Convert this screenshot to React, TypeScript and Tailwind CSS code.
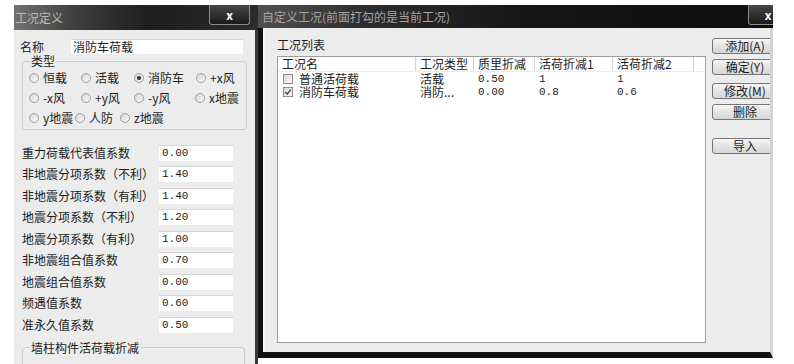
const COEFS: [string, string][] = [
  ["重力荷载代表值系数", "0.00"],
  ["非地震分项系数（不利）", "1.40"],
  ["非地震分项系数（有利）", "1.40"],
  ["地震分项系数（不利）", "1.20"],
  ["地震分项系数（有利）", "1.00"],
  ["非地震组合值系数", "0.70"],
  ["地震组合值系数", "0.00"],
  ["频遇值系数", "0.60"],
  ["准永久值系数", "0.50"],
];

type Opt = { label: string; w: number; on?: boolean };

const RADIO_ROWS: Opt[][] = [
  [
    { label: "恒载", w: 52 },
    { label: "活载", w: 53 },
    { label: "消防车", w: 62, on: true },
    { label: "+x风", w: 50 },
  ],
  [
    { label: "-x风", w: 52 },
    { label: "+y风", w: 53 },
    { label: "-y风", w: 61 },
    { label: "x地震", w: 50 },
  ],
  [
    { label: "y地震", w: 46 },
    { label: "人防", w: 45 },
    { label: "z地震", w: 50 },
  ],
];

const COLS = [139, 58, 61, 78, 81];
const HEADERS = ["工况名", "工况类型", "质里折减", "活荷折减1", "活荷折减2"];
const ROWS = [
  { on: false, cells: ["普通活荷载", "活载", "0.50", "1", "1"] },
  { on: true, cells: ["消防车荷载", "消防...", "0.00", "0.8", "0.6"] },
];

const BUTTONS = [
  { label: "添加(A)", mt: "mt-0" },
  { label: "确定(Y)", mt: "mt-[5px]" },
  { label: "修改(M)", mt: "mt-[8px]" },
  { label: "删除", mt: "mt-[5px]" },
  { label: "导入", mt: "mt-[18px]" },
];

const mono = "font-['Liberation_Mono',monospace] text-[11px]";

function Radio({ on }: { on?: boolean }) {
  return (
    <span className="w-[10px] h-[10px] rounded-full border border-[#a0a0a0] bg-[linear-gradient(135deg,#d4d4d4,#fbfbfb)] flex items-center justify-center shrink-0">
      {on ? <span className="w-[4px] h-[4px] rounded-full bg-[#2a2a2a]" /> : null}
    </span>
  );
}

function Check({ on }: { on?: boolean }) {
  return (
    <span className="w-[10px] h-[10px] border border-[#8e8e8e] bg-[linear-gradient(135deg,#d8d8d8,#f8f8f8)] flex items-center justify-center shrink-0">
      {on ? (
        <svg viewBox="0 0 10 10" className="w-[8px] h-[8px]">
          <path d="M1.5 5 L4 7.6 L8.6 2" stroke="#333" strokeWidth="1.4" fill="none" />
        </svg>
      ) : null}
    </span>
  );
}

function CloseBtn({ className }: { className?: string }) {
  return (
    <div
      className={
        "h-[20px] border border-t-0 border-[#8c8c8c] rounded-b-[3px] bg-[linear-gradient(#474747,#1a1a1a)] flex items-center justify-center text-white font-bold text-[12px] leading-none shrink-0 " +
        (className ?? "")
      }
    >
      x
    </div>
  );
}

function isNum(s: string) {
  return /^[0-9.]+$/.test(s);
}

function LeftWindow() {
  return (
    <div className="w-[244px] h-[359px] flex flex-col shrink-0">
      <div className="h-[25px] flex items-start justify-between pr-[8px] bg-[linear-gradient(to_right,#727272,#3e3e3e_25%,#1e1e1e_55%,#2b2b2b)]">
        <span className="pl-[1px] text-[12px] leading-[25px] text-[#b8b8b8]">工况定义</span>
        <CloseBtn className="w-[41px]" />
      </div>
      <div className="flex-1 bg-[#ececec] border-r-[3px] border-[#3a3a3a] pl-[6px] pr-[7px] pt-[9px] overflow-hidden">
        <div className="flex items-center h-[15px]">
          <span className="w-[51px] text-[12px] leading-[15px]">名称</span>
          <div className="w-[172px] h-[15px] bg-white border-t border-[#d6d6d6] pl-[2px] text-[12px] leading-[14px]">
            消防车荷载
          </div>
        </div>

        <fieldset className="ml-[2px] w-[223px] border border-[#cdcdcd] rounded-[3px] pb-[1px]">
          <legend className="ml-[7px] px-[1px] text-[12px] leading-[14px]">类型</legend>
          {RADIO_ROWS.map((row, i) => (
            <div key={i} className="flex items-center h-[20px] pl-[6px]">
              {row.map((o) => (
                <div key={o.label} className="flex items-center gap-[4px]" style={{ width: o.w }}>
                  <Radio on={o.on} />
                  <span className="text-[12px] leading-[14px] whitespace-nowrap">{o.label}</span>
                </div>
              ))}
            </div>
          ))}
        </fieldset>

        <div className="mt-[12px] flex flex-col">
          {COEFS.map(([label, v]) => (
            <div key={label} className="h-[21.5px] flex items-center pl-[2px]">
              <span className="w-[137px] text-[12px] leading-[14px] whitespace-nowrap">{label}</span>
              <div className={"w-[74px] h-[16px] bg-white border-t border-[#d4d4d4] pl-[3px] leading-[15px] " + mono}>
                {v}
              </div>
            </div>
          ))}
        </div>

        <fieldset className="mt-[5px] ml-[2px] w-[223px] h-[40px] border border-[#cdcdcd] rounded-[3px]">
          <legend className="ml-[7px] px-[1px] text-[12px] leading-[14px]">墙柱构件活荷载折减</legend>
        </fieldset>
      </div>
    </div>
  );
}

function RightWindow() {
  return (
    <div className="w-[515px] h-[353px] flex flex-col shrink-0">
      <div className="h-[23px] flex items-start justify-between overflow-hidden bg-[linear-gradient(to_right,#505050,#2e2e2e_20%,#161616_50%,#0e0e0e)]">
        <span className="pl-[4px] text-[12px] leading-[23px] text-[#a4a4a4]">自定义工况(前面打勾的是当前工况)</span>
        <CloseBtn className="w-[40px] -mr-[15px]" />
      </div>
      <div className="flex-1 flex bg-[#ececec] border-l-[5px] border-l-[#111] border-r-[3px] border-r-[#d4d4d4] border-b-[6px] border-b-[#111] shadow-[inset_2px_0_0_#f6f6f6] overflow-hidden">
        <div className="pl-[14px] pt-[9px] shrink-0">
          <div className="text-[12px] leading-[15px]">工况列表</div>
          <div className="mt-[4px] w-[429px] h-[287px] bg-white border border-[#9e9e9e] flex flex-col">
            <div className="h-[15px] flex border-b border-[#ececec] shrink-0">
              {HEADERS.map((h, i) => (
                <div
                  key={h}
                  className="h-full border-r border-[#d2d2d2] pl-[4px] text-[12px] leading-[14px] whitespace-nowrap"
                  style={{ width: COLS[i] - (i === 0 ? 1 : 0) }}
                >
                  {h}
                </div>
              ))}
            </div>
            {ROWS.map((r) => (
              <div key={r.cells[0]} className="h-[13px] flex items-center shrink-0">
                {r.cells.map((c, i) => (
                  <div
                    key={i}
                    className={
                      "flex items-center whitespace-nowrap " +
                      (i === 0 ? "pl-[5px] gap-[6px] " : "pl-[4px] ") +
                      (isNum(c) ? mono + " leading-[12px]" : "text-[12px] leading-[12px]")
                    }
                    style={{ width: COLS[i] - (i === 0 ? 1 : 0) }}
                  >
                    {i === 0 ? <Check on={r.on} /> : null}
                    <span>{c}</span>
                  </div>
                ))}
              </div>
            ))}
          </div>
        </div>
        <div className="ml-[6px] pt-[10px] flex flex-col shrink-0">
          {BUTTONS.map((b) => (
            <div
              key={b.label}
              className={
                "w-[66px] h-[16px] border border-[#767676] rounded-[3px] bg-[linear-gradient(#f6f6f6,#e4e4e4_50%,#d6d6d6)] flex items-center justify-center text-[12px] leading-none " +
                b.mt
              }
            >
              {b.label}
            </div>
          ))}
        </div>
      </div>
    </div>
  );
}

export default function App() {
  return (
    <div className="w-[794px] h-[364px] bg-white overflow-hidden flex pt-[5px] pl-[14px] text-[#1c1c1c] font-['Noto_Sans_CJK_SC',sans-serif]">
      <LeftWindow />
      <RightWindow />
    </div>
  );
}
